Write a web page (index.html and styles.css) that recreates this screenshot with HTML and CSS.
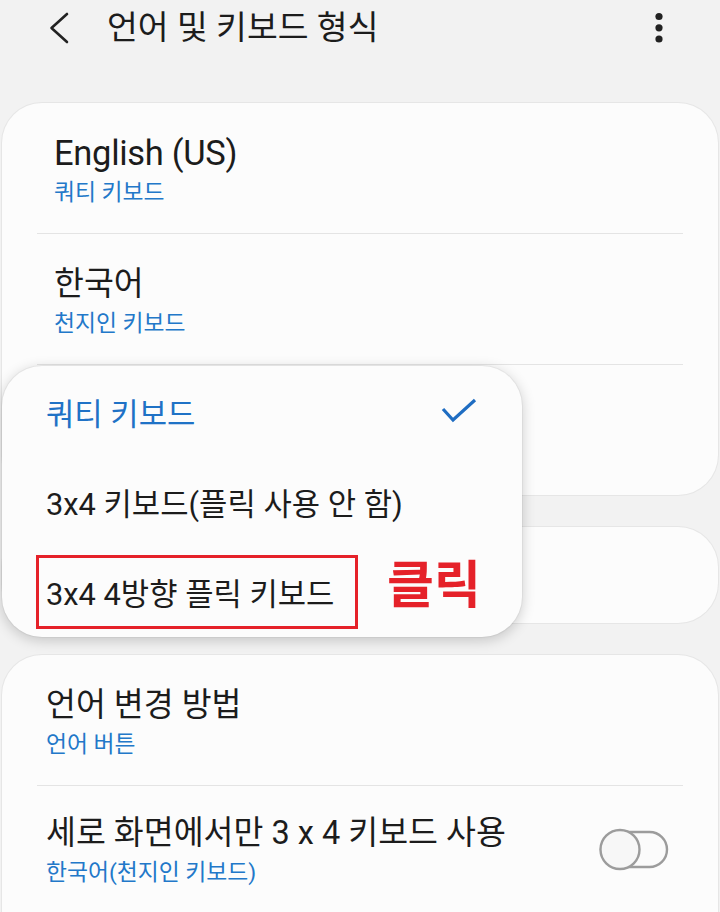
FILE: index.html
```html
<!DOCTYPE html>
<html lang="ko">
<head>
<meta charset="utf-8">
<title>언어 및 키보드 형식</title>
<link rel="stylesheet" href="styles.css">
</head>
<body>
<header class="appbar">
  <svg class="back" width="24" height="32" viewBox="0 0 24 32"><path d="M19 2 L3.5 16 L19 30" fill="none" stroke="#222" stroke-width="2.6" stroke-linecap="round" stroke-linejoin="round"/></svg>
  <h1 class="title">언어 및 키보드 형식</h1>
  <svg class="more" width="10" height="32" viewBox="0 0 10 32"><circle cx="5" cy="4.5" r="3.6" fill="#222"/><circle cx="5" cy="15.8" r="3.6" fill="#222"/><circle cx="5" cy="27" r="3.6" fill="#222"/></svg>
</header>
<main class="content">
  <section class="card card-langs">
    <div class="row">
      <div class="row-title latin">English (US)</div>
      <div class="row-sub">쿼티 키보드</div>
    </div>
    <div class="divider"></div>
    <div class="row">
      <div class="row-title">한국어</div>
      <div class="row-sub">천지인 키보드</div>
    </div>
    <div class="divider"></div>
    <div class="row"></div>
  </section>
  <section class="card card-short"></section>
  <section class="card card-options">
    <div class="row">
      <div class="row-title">언어 변경 방법</div>
      <div class="row-sub">언어 버튼</div>
    </div>
    <div class="divider"></div>
    <div class="row row-switch">
      <div class="row-text">
        <div class="row-title">세로 화면에서만 3 x 4 키보드 사용</div>
        <div class="row-sub">한국어(천지인 키보드)</div>
      </div>
      <svg class="switch" width="72" height="44" viewBox="0 0 72 44"><rect x="3" y="4" width="66" height="35" rx="17.5" fill="#fbfbfb" stroke="#9c9c9c" stroke-width="2.4"/><circle cx="22" cy="21.5" r="19.5" fill="#f7f7f7" stroke="#9c9c9c" stroke-width="2.4"/></svg>
    </div>
  </section>
</main>
<div class="popup">
  <div class="popup-item selected"><span>쿼티 키보드</span>
    <svg class="check" width="36" height="26" viewBox="0 0 36 26"><path d="M2 11 L12 22 L34 2" fill="none" stroke="#1f6dc2" stroke-width="3.2"/></svg>
  </div>
  <div class="popup-item"><span>3x4 키보드(플릭 사용 안 함)</span></div>
  <div class="popup-item"><span>3x4 4방향 플릭 키보드</span></div>
</div>
<div class="highlight"></div>
<div class="click-label">클릭</div>
</body>
</html>
```
FILE: styles.css
```css
html, body {
  margin: 0;
  padding: 0;
}
body {
  width: 720px;
  height: 912px;
  overflow: hidden;
  position: relative;
  background: #f2f2f2;
  font-family: "Roboto", "Noto Sans CJK KR", sans-serif;
  color: #1c1c1c;
}
.appbar {
  height: 56px;
  display: flex;
  align-items: center;
  padding: 0 56px 0 48px;
}
.back {
  flex: none;
}
.title {
  margin: 0 0 0 35px;
  font-size: 33.5px;
  font-weight: 400;
  line-height: 40px;
  flex: 1;
}
.more {
  flex: none;
}
.content {
  padding: 47px 2px 0;
  display: flex;
  flex-direction: column;
  gap: 32px;
}
.card {
  background: #fcfcfc;
  border-radius: 40px;
  box-shadow: 0 0 0 1px #e6e6e6;
}
.row {
  height: 130px;
  box-sizing: border-box;
  padding: 30px 0 0 52px;
}
.card-options .row {
  padding-left: 44px;
}
.row-title {
  font-size: 32.5px;
  line-height: 40px;
}
.row-title.latin {
  font-size: 34.5px;
  letter-spacing: -0.3px;
}
.row-sub {
  margin-top: 6px;
  font-size: 22.8px;
  line-height: 28px;
  color: #2278c9;
}
.divider {
  height: 1px;
  margin: 0 35px;
  background: #e4e4e4;
}
.card-short {
  height: 96px;
}
.card-options {
  height: 300px;
}
.row-switch {
  display: flex;
  align-items: flex-start;
  padding-top: 27px;
}
.row-text {
  flex: 1;
}
.switch {
  flex: none;
  margin: 15px 48px 0 0;
}
.popup {
  position: absolute;
  left: 2px;
  top: 366px;
  width: 520px;
  height: 271px;
  background: #fcfcfc;
  border-radius: 40px;
  box-shadow: 0 3px 14px rgba(0, 0, 0, 0.2), 0 0 0 1px rgba(0, 0, 0, 0.04);
  display: flex;
  flex-direction: column;
}
.popup-item {
  height: 90px;
  display: flex;
  align-items: center;
  justify-content: space-between;
  padding: 0 44px;
  font-size: 30.8px;
}
.popup-item.selected {
  color: #1f72c6;
}
.check {
  margin-right: 1px;
}
.highlight {
  position: absolute;
  left: 36px;
  top: 555px;
  width: 322px;
  height: 74px;
  box-sizing: border-box;
  border: 3px solid #e52129;
}
.click-label {
  position: absolute;
  left: 387px;
  top: 560px;
  font-size: 51px;
  line-height: 52px;
  font-weight: 700;
  color: #e52129;
}
```
